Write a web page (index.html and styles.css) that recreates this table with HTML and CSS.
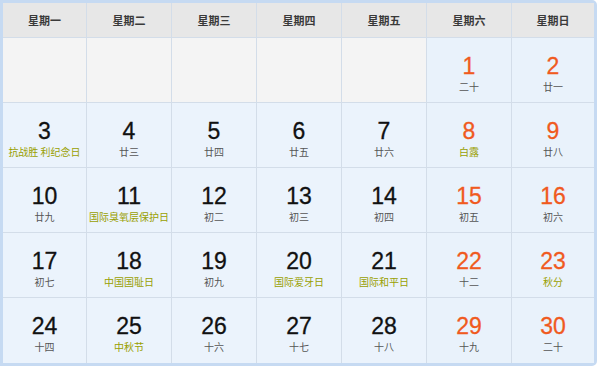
FILE: index.html
```html
<!DOCTYPE html>
<html lang="zh">
<head>
<meta charset="utf-8">
<link rel="stylesheet" href="styles.css">
</head>
<body>
<div class="cal">
  <div class="hd">星期一</div>
  <div class="hd">星期二</div>
  <div class="hd">星期三</div>
  <div class="hd">星期四</div>
  <div class="hd">星期五</div>
  <div class="hd">星期六</div>
  <div class="hd last">星期日</div>

  <div class="c empty"></div>
  <div class="c empty"></div>
  <div class="c empty"></div>
  <div class="c empty"></div>
  <div class="c empty"></div>
  <div class="c we"><span class="n">1</span><span class="l">二十</span></div>
  <div class="c we last"><span class="n">2</span><span class="l">廿一</span></div>

  <div class="c"><span class="n">3</span><span class="l f">抗战胜 利纪念日</span></div>
  <div class="c"><span class="n">4</span><span class="l">廿三</span></div>
  <div class="c"><span class="n">5</span><span class="l">廿四</span></div>
  <div class="c"><span class="n">6</span><span class="l">廿五</span></div>
  <div class="c"><span class="n">7</span><span class="l">廿六</span></div>
  <div class="c we"><span class="n">8</span><span class="l f">白露</span></div>
  <div class="c we last"><span class="n">9</span><span class="l">廿八</span></div>

  <div class="c"><span class="n">10</span><span class="l">廿九</span></div>
  <div class="c"><span class="n">11</span><span class="l f">国际臭氧层保护日</span></div>
  <div class="c"><span class="n">12</span><span class="l">初二</span></div>
  <div class="c"><span class="n">13</span><span class="l">初三</span></div>
  <div class="c"><span class="n">14</span><span class="l">初四</span></div>
  <div class="c we"><span class="n">15</span><span class="l">初五</span></div>
  <div class="c we last"><span class="n">16</span><span class="l">初六</span></div>

  <div class="c"><span class="n">17</span><span class="l">初七</span></div>
  <div class="c"><span class="n">18</span><span class="l f">中国国耻日</span></div>
  <div class="c"><span class="n">19</span><span class="l">初九</span></div>
  <div class="c"><span class="n">20</span><span class="l f">国际爱牙日</span></div>
  <div class="c"><span class="n">21</span><span class="l f">国际和平日</span></div>
  <div class="c we"><span class="n">22</span><span class="l">十二</span></div>
  <div class="c we last"><span class="n">23</span><span class="l f">秋分</span></div>

  <div class="c bot"><span class="n">24</span><span class="l">十四</span></div>
  <div class="c bot"><span class="n">25</span><span class="l f">中秋节</span></div>
  <div class="c bot"><span class="n">26</span><span class="l">十六</span></div>
  <div class="c bot"><span class="n">27</span><span class="l">十七</span></div>
  <div class="c bot"><span class="n">28</span><span class="l">十八</span></div>
  <div class="c we bot"><span class="n">29</span><span class="l">十九</span></div>
  <div class="c we bot last"><span class="n">30</span><span class="l">二十</span></div>
</div>
</body>
</html>
```

FILE: styles.css
```css
html, body {
  margin: 0;
  padding: 0;
  background: #ffffff;
}
body {
  width: 600px;
  height: 368px;
  overflow: hidden;
  font-family: "Liberation Sans", Arial, "Noto Sans CJK SC", sans-serif;
}
.cal {
  box-sizing: border-box;
  width: 597px;
  height: 366px;
  border: 3px solid #c6daf2;
  border-radius: 0 5px 5px 0;
  display: grid;
  grid-template-columns: 84px repeat(5, 85px) 1fr;
  grid-template-rows: 35px repeat(5, 1fr);
  background: #eaf2fb;
}
.hd {
  background: #e7e7e7;
  border-right: 1px solid #d3dde9;
  border-bottom: 1px solid #d3dde9;
  display: flex;
  align-items: center;
  justify-content: center;
  font-family: "Noto Sans CJK SC", sans-serif;
  font-size: 11px;
  font-weight: bold;
  color: #3a3a3a;
}
.c {
  border-right: 1px solid #d3dde9;
  border-bottom: 1px solid #d3dde9;
  display: flex;
  flex-direction: column;
  align-items: center;
  padding-top: 15px;
  background: #ebf3fc;
}
.c.empty {
  background: #f4f4f4;
}
.c.we {
  background: #e9f2fb;
}
.last {
  border-right: none;
}
.bot {
  border-bottom: none;
}
.n {
  font-family: "Liberation Sans", Arial, sans-serif;
  font-size: 23px;
  line-height: 26px;
  color: #111111;
  -webkit-text-stroke: 0.3px currentColor;
}
.we .n {
  color: #f05a1e;
}
.l {
  margin-top: 1px;
  font-family: "Noto Sans CJK SC", sans-serif;
  font-size: 10px;
  line-height: 14px;
  white-space: nowrap;
  color: #555555;
}
.l.f {
  color: #99a000;
}
```
